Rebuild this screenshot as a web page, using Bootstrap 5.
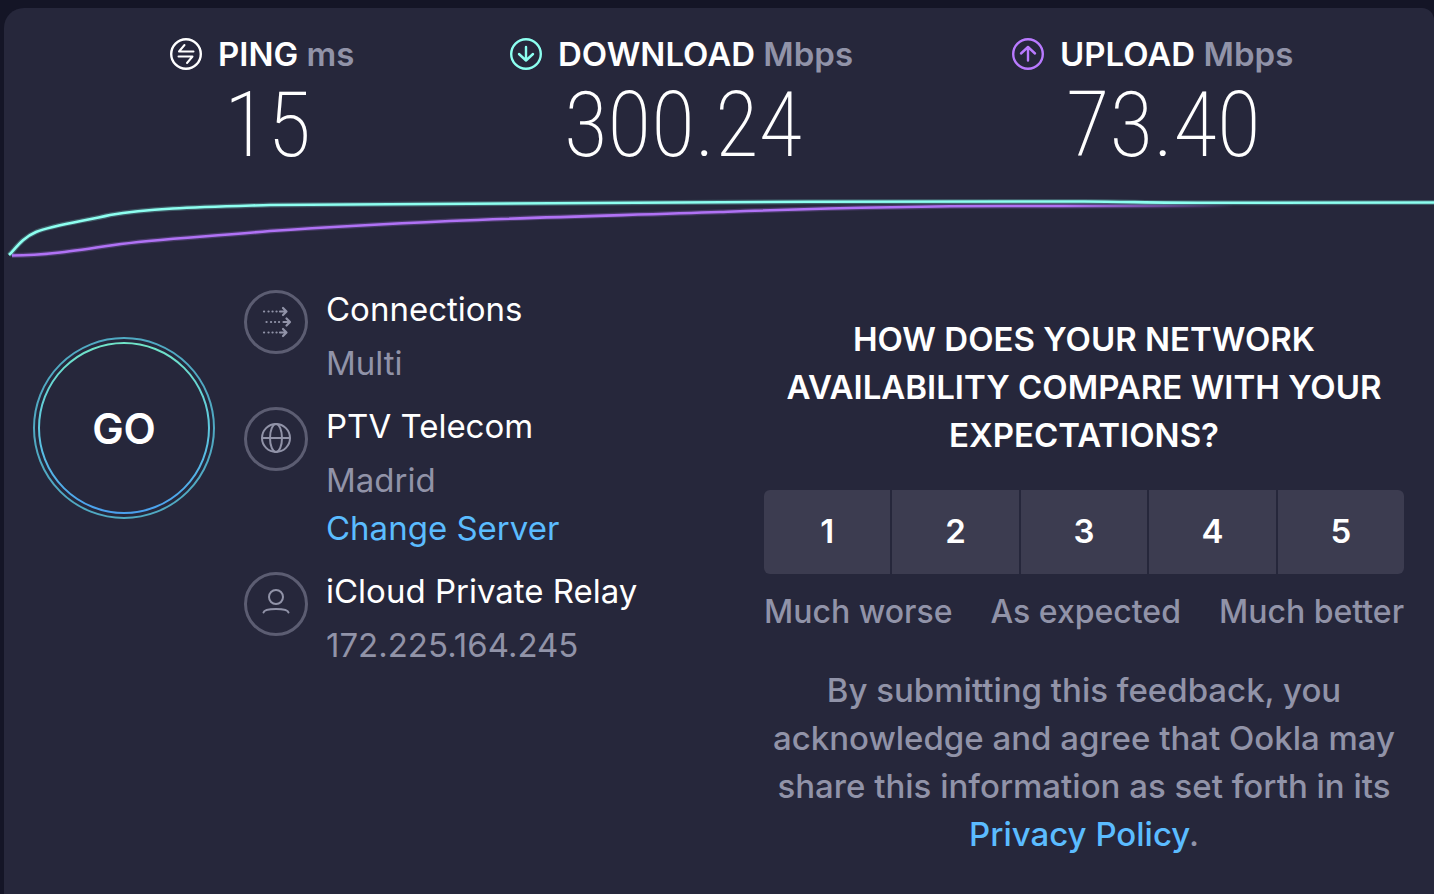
<!DOCTYPE html>
<html lang="en">
<head>
<meta charset="utf-8">
<meta name="viewport" content="width=device-width, initial-scale=1">
<title>Speedtest result</title>
<link href="https://cdn.jsdelivr.net/npm/bootstrap@5.3.0/dist/css/bootstrap.min.css" rel="stylesheet">
<style>
:root{--page:#141526;--panel:#26273b;--muted:#9193a8;--tile:#3c3c50;--link:#5bbcff}
body{background:var(--page);color:#fff;font-family:Inter,"Liberation Sans",sans-serif;font-size:33px;line-height:48px}
a{color:var(--link);text-decoration:none}
.muted{color:var(--muted)}
.panel{background:var(--panel);border-radius:20px 12px 0 0;margin:8px 0 0 4px;min-height:calc(100vh - 8px)}
.results{display:grid;grid-template-columns:340fr 502fr 422fr;padding:22px 0 0 166px}
.result-title{font-size:33px;font-weight:600;gap:16px}
.result-title svg{width:32px;height:32px;flex:none}
.result-value{font-family:"Roboto Condensed",Roboto,sans-serif;font-weight:200;font-size:90px;line-height:96px;padding-left:54px}
.chart{height:80px;margin-top:12px}
.lower{padding-top:19px}
.go-cell{width:210px;padding:52px 0 0 29px}
.go{width:182px;height:182px;font-size:42px;font-weight:600}
.go svg{inset:0}
.details{padding-left:30px;gap:15px}
.detail{gap:18px}
.ring-icon{width:64px;height:64px;margin-top:5px}
.sub{margin-top:6px}
.survey{width:640px;margin-right:30px;padding-top:30px;font-weight:500}
.survey h2{font-size:33px;line-height:48px;font-weight:600;margin:0 0 31px}
.score{background:var(--tile);color:#fff;height:84px;flex:1 1 0;font-size:33px;font-weight:600;border-radius:6px}
.score:hover{background:#4a4a60;color:#fff}
.scores{gap:2px}
.legend-row{margin-top:14px;font-size:32px;white-space:nowrap}
.consent{margin:30px 0 0}
</style>
</head>
<body>
<main class="panel d-flex flex-column overflow-hidden">
  <section class="results">
    <div>
      <div class="result-title d-flex align-items-center">
        <svg viewBox="0 0 32 32" fill="none" stroke="#fff" stroke-width="2" stroke-linecap="round" stroke-linejoin="round" aria-hidden="true"><circle cx="16" cy="16" r="14.800" stroke-width="2.400"/><path d="M14.500 7L9 13.500H23.500M8.500 18.500H22.500L17 25"/></svg>
        <span>PING <span class="muted">ms</span></span>
      </div>
      <div class="result-value">15</div>
    </div>
    <div>
      <div class="result-title d-flex align-items-center">
        <svg viewBox="0 0 32 32" fill="none" stroke="#8dfff0" stroke-width="2.400" stroke-linecap="round" stroke-linejoin="round" aria-hidden="true"><circle cx="16" cy="16" r="14.800"/><path d="M16 9V22.500M9 16L16 22.500L23 16"/></svg>
        <span>DOWNLOAD <span class="muted">Mbps</span></span>
      </div>
      <div class="result-value">300.24</div>
    </div>
    <div>
      <div class="result-title d-flex align-items-center">
        <svg viewBox="0 0 32 32" fill="none" stroke="#b97aff" stroke-width="2.400" stroke-linecap="round" stroke-linejoin="round" aria-hidden="true"><circle cx="16" cy="16" r="14.800"/><path d="M16 22.500V9M9 15.500L16 9L23 15.500"/></svg>
        <span>UPLOAD <span class="muted">Mbps</span></span>
      </div>
      <div class="result-value">73.40</div>
    </div>
  </section>

  <svg class="chart w-100 d-block" viewBox="0 0 1430 80" preserveAspectRatio="none" fill="none" aria-hidden="true">
    <defs>
      <linearGradient id="fade" gradientUnits="userSpaceOnUse" x1="0" y1="0" x2="1430" y2="0"><stop offset=".74" stop-color="#b072f5"/><stop offset=".86" stop-color="#b072f5" stop-opacity="0"/></linearGradient>
      <path id="up" d="M8 69.500C40 69.500 70 65 110 59C150 53 200 51 266 45C340 40 380 38 446 35C540 31 630 29 716 26C800 23 880 20 1000 20H1430"/>
      <path id="down" d="M5 69C12 62 18 52 32 46C48 39 80 35 106 29C146 22 200 21 266 19C420 16 800 15.500 1080 15.500C1130 16 1160 16.800 1200 16.800L1430 16.500"/>
    </defs>
    <g stroke="url(#fade)"><use href="#up" stroke-width="5" opacity=".25"/><use href="#up" stroke-width="2.600"/></g>
    <g stroke="#8dfff0"><use href="#down" stroke-width="5" opacity=".25"/><use href="#down" stroke-width="2.600"/></g>
  </svg>

  <div class="lower d-flex">
    <div class="go-cell flex-shrink-0">
      <button type="button" class="go btn border-0 rounded-circle text-white p-0 position-relative">
        <svg class="position-absolute w-100 h-100" viewBox="0 0 182 182" fill="none" stroke-width="2" aria-hidden="true">
          <defs><linearGradient id="goring" x1="0" y1="0" x2="0" y2="1"><stop stop-color="#70e4c8"/><stop offset=".5" stop-color="#5ec8de"/><stop offset="1" stop-color="#4aa0ee"/></linearGradient></defs>
          <circle cx="91" cy="91" r="90" stroke="#50a9c2"/><circle cx="91" cy="91" r="85" stroke="url(#goring)"/>
        </svg>
        GO
      </button>
    </div>

    <div class="details d-flex flex-column">
      <div class="detail d-flex">
        <svg class="ring-icon flex-shrink-0" viewBox="0 0 64 64" fill="none" stroke="#9193a8" stroke-width="2.200" stroke-linecap="round" stroke-linejoin="round" aria-hidden="true"><circle cx="32" cy="32" r="30.500" stroke="#5c5d72" stroke-width="3"/><path d="M20 21.500h.1M24.500 21.500h.1M28.500 21.500h.1M32.500 21.500h.1M36 21.500h6M39 18l3.500 3.500L39 25M22.500 32h.1M27 32h.1M31 32h.1M35 32h.1M39.500 32h6M42.500 28.500L46 32l-3.500 3.500M20 42.500h.1M24.500 42.500h.1M28.500 42.500h.1M32.500 42.500h.1M36 42.500h6M39 39l3.500 3.500L39 46"/></svg>
        <div><div>Connections</div><div class="sub muted">Multi</div></div>
      </div>
      <div class="detail d-flex">
        <svg class="ring-icon flex-shrink-0" viewBox="0 0 64 64" fill="none" stroke="#9193a8" stroke-width="2" aria-hidden="true"><circle cx="32" cy="32" r="30.500" stroke="#5c5d72" stroke-width="3"/><circle cx="32" cy="31" r="14"/><ellipse cx="32" cy="31" rx="6" ry="14"/><path d="M18 31H46"/></svg>
        <div><div>PTV Telecom</div><div class="sub muted">Madrid</div><a href="#">Change Server</a></div>
      </div>
      <div class="detail d-flex">
        <svg class="ring-icon flex-shrink-0" viewBox="0 0 64 64" fill="none" stroke="#9193a8" stroke-width="2" stroke-linecap="round" aria-hidden="true"><circle cx="32" cy="32" r="30.500" stroke="#5c5d72" stroke-width="3"/><circle cx="32" cy="25" r="7"/><path d="M19.500 40.500C20 38 26 37 32 37S44 38 44.500 40.500"/></svg>
        <div><div>iCloud Private Relay</div><div class="sub muted">172.225.164.245</div></div>
      </div>
    </div>

    <section class="survey ms-auto flex-shrink-0 text-center">
      <h2>HOW DOES YOUR NETWORK AVAILABILITY COMPARE WITH YOUR EXPECTATIONS?</h2>
      <div class="scores d-flex" role="group" aria-label="Rating">
        <button type="button" class="score btn border-0 rounded-end-0">1</button>
        <button type="button" class="score btn border-0 rounded-0">2</button>
        <button type="button" class="score btn border-0 rounded-0">3</button>
        <button type="button" class="score btn border-0 rounded-0">4</button>
        <button type="button" class="score btn border-0 rounded-start-0">5</button>
      </div>
      <div class="legend-row muted d-flex justify-content-between"><span>Much worse</span><span>As expected</span><span>Much better</span></div>
      <p class="consent muted">By submitting this feedback, you acknowledge and agree that Ookla may share this information as set forth in its <a href="#">Privacy Policy</a>.</p>
    </section>
  </div>
</main>
</body>
</html>
